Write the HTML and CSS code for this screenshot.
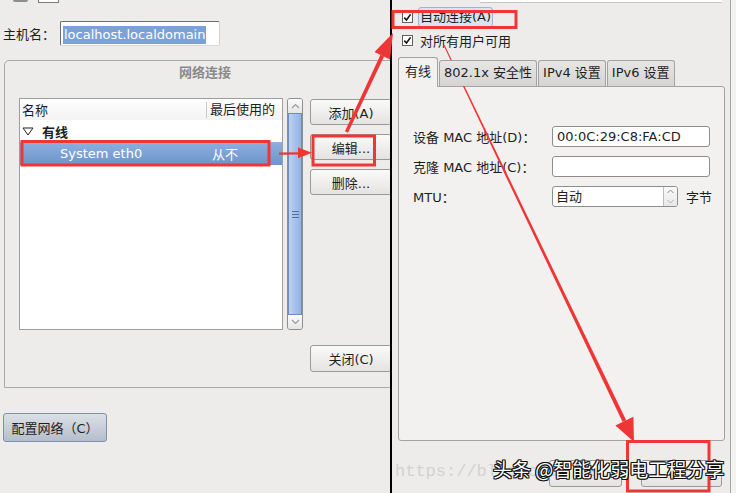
FILE: index.html
```html
<!DOCTYPE html>
<html lang="zh-CN">
<head>
    <meta charset="UTF-8">
    <meta name="viewport" content="width=device-width, initial-scale=1.0">
    <title>网络连接</title>
    <link rel="stylesheet" href="styles.css">
</head>
<body>
<div class="screen">
    <div class="win-left">
        <div class="stub"><span class="stub-a"></span><span class="stub-b"></span></div>
        <div class="host-row">
            <span class="host-label">主机名：</span>
            <div class="host-input"><span class="host-sel">localhost.localdomain</span></div>
        </div>
        <div class="group">
            <div class="group-title">网络连接</div>
            <div class="group-body">
                <div class="list">
                    <div class="list-head"><span class="col-name">名称</span><span class="col-last">最后使用的</span></div>
                    <div class="list-row cat">
                        <svg class="expander" width="12" height="9" viewBox="0 0 12 9"><polygon points="1,1 11,1 6,8" fill="none" stroke="#222" stroke-width="1"/></svg>
                        <b>有线</b>
                    </div>
                    <div class="list-row selected"><span class="col-name">System eth0</span><span class="col-last">从不</span></div>
                </div>
                <div class="scrollbar">
                    <div class="sb-btn"><svg width="9" height="6" viewBox="0 0 9 6"><polyline points="1,5 4.5,1.5 8,5" fill="none" stroke="#9a9a9a" stroke-width="1.2"/></svg></div>
                    <div class="sb-thumb"><span class="grip"></span></div>
                    <div class="sb-btn"><svg width="9" height="6" viewBox="0 0 9 6"><polyline points="1,1 4.5,4.5 8,1" fill="none" stroke="#9a9a9a" stroke-width="1.2"/></svg></div>
                </div>
                <div class="side-buttons">
                    <button class="btn">添加(A)</button>
                    <button class="btn">编辑...</button>
                    <button class="btn">删除...</button>
                </div>
            </div>
            <div class="group-foot"><button class="btn close">关闭(C)</button></div>
        </div>
        <button class="btn-config">配置网络（C）</button>
    </div>

    <div class="divider"></div>

    <div class="win-right">
        <div class="frame">
            <div class="top-field"></div>
            <div class="check-row first">
                <svg class="cb" width="11" height="11" viewBox="0 0 11 11"><rect x="0.5" y="0.5" width="10" height="10" fill="#fff" stroke="#5f5f5f"/><path d="M2.3 5.6 L4.5 8 L8.6 2.4" fill="none" stroke="#111" stroke-width="1.6"/></svg>
                <span class="focus">自动连接(A)</span>
            </div>
            <div class="check-row second">
                <svg class="cb" width="11" height="11" viewBox="0 0 11 11"><rect x="0.5" y="0.5" width="10" height="10" fill="#fff" stroke="#5f5f5f"/><path d="M2.3 5.6 L4.5 8 L8.6 2.4" fill="none" stroke="#111" stroke-width="1.6"/></svg>
                <span>对所有用户可用</span>
            </div>
            <div class="tabs">
                <span class="tab active">有线</span>
                <span class="tab">802.1x 安全性</span>
                <span class="tab">IPv4 设置</span>
                <span class="tab">IPv6 设置</span>
            </div>
            <div class="panel">
                <div class="form">
                    <span class="form-label">设备 MAC 地址(D)：</span>
                    <div class="field">00:0C:29:C8:FA:CD</div>
                    <span class="form-label">克隆 MAC 地址(C)：</span>
                    <div class="field"></div>
                    <span class="form-label">MTU：</span>
                    <div class="spin-row">
                        <div class="spin">
                            <span class="spin-val">自动</span>
                            <span class="spin-btns">
                                <span><svg width="7" height="5" viewBox="0 0 7 5"><polyline points="0.5,4 3.5,1 6.5,4" fill="none" stroke="#8a8a8a"/></svg></span>
                                <span><svg width="7" height="5" viewBox="0 0 7 5"><polyline points="0.5,1 3.5,4 6.5,1" fill="none" stroke="#b0b0b0"/></svg></span>
                            </span>
                        </div>
                        <span class="unit">字节</span>
                    </div>
                </div>
            </div>
            <div class="dlg-buttons">
                <button class="btn dlg-a"></button>
                <button class="btn dlg-b"></button>
            </div>
        </div>
    </div>

    <div class="watermark">https://blog.csdn.net/</div>

    <svg class="marks" width="736" height="493" viewBox="0 0 736 493">
        <g fill="none" stroke="#ef3636" stroke-width="3">
            <rect x="22" y="141.5" width="247" height="23.5"/>
            <rect x="313" y="136" width="61.5" height="29"/>
            <rect x="393" y="11.5" width="123" height="16"/>
            <rect x="627.5" y="441.5" width="81.5" height="49.5"/>
        </g>
        <g fill="#ef3636">
            <polygon points="279,152.6 300,152.2 300,154.4 279,154.8"/>
            <polygon points="312,152.8 298,147.6 298,158.2"/>
            <polygon points="345,131.3 348,132.7 384.1,56.5 380.5,54.7"/>
            <polygon points="393,33 390,59.5 374.5,52"/>
            <polygon points="443.5,45.2 444.5,44.8 626.2,420.3 622.6,422.1"/>
            <polygon points="634,442 615.4,425.6 633.4,416.8"/>
        </g>
    </svg>

    <div class="toutiao">头条 @智能化弱电工程分享</div>
</div>
</body>
</html>
```

FILE: styles.css
```css
* {
    box-sizing: border-box;
}
html, body {
    margin: 0;
    padding: 0;
}
body {
    width: 736px;
    height: 493px;
    overflow: hidden;
    background: #edecea;
    font-family: "DejaVu Sans", "Noto Sans CJK SC", sans-serif;
    font-size: 13px;
    color: #1e1e1e;
}
.screen {
    position: relative;
    display: flex;
    width: 736px;
    height: 493px;
}

/* left window */
.win-left {
    flex: none;
    width: 390px;
    height: 493px;
    overflow: hidden;
    background: #edecea;
}
.stub {
    display: flex;
    height: 3px;
}
.stub-a {
    margin-left: 13px;
    width: 15px;
    height: 2px;
    background: #8c928a;
    border-radius: 0 0 3px 3px;
}
.stub-b {
    margin-left: 10px;
    width: 21px;
    height: 3px;
    background: #fff;
    border: 1px solid #7a7a7a;
    border-top: 0;
}
.host-row {
    display: flex;
    align-items: center;
    height: 25px;
    margin-top: 18px;
}
.host-label {
    width: 60px;
    padding-left: 3px;
}
.host-input {
    width: 160px;
    height: 25px;
    background: #fff;
    border: 1px solid;
    border-color: #6e6e6e #d0d0d0 #d9d9d9 #6e6e6e;
    border-radius: 2px;
    padding: 4px 0 0 2px;
}
.host-sel {
    display: inline-block;
    background: #7aa2d8;
    color: #fff;
    line-height: 18px;
    padding: 0 1px;
}
.group {
    width: 402px;
    height: 328px;
    margin: 14px 0 0 4px;
    border: 1px solid #a9a9a9;
    border-radius: 5px 0 0 0;
}
.group-title {
    text-align: center;
    font-weight: bold;
    color: #8a8a8a;
    line-height: 16px;
    padding-top: 4px;
}
.group-body {
    display: flex;
    align-items: flex-start;
    margin: 17px 0 0 14px;
}
.list {
    width: 264px;
    height: 232px;
    background: #fff;
    border: 1px solid #9e9e9e;
}
.list-head {
    display: flex;
    align-items: center;
    height: 21px;
    background: linear-gradient(#ffffff, #f3f3f3);
}
.list-head .col-name {
    width: 186px;
    padding-left: 2px;
}
.list-head .col-last {
    border-left: 1px solid #c9c9c9;
    padding-left: 3px;
    line-height: 16px;
}
.list-row {
    display: flex;
    align-items: center;
    height: 22px;
}
.cat {
    padding-left: 2px;
}
.expander {
    margin-right: 8px;
}
.selected {
    height: 23px;
    background: linear-gradient(#8cb0df, #6d93ca);
    color: #fff;
}
.selected .col-name {
    width: 187px;
    padding-left: 40px;
}
.selected .col-last {
    padding-left: 5px;
}
.scrollbar {
    display: flex;
    flex-direction: column;
    width: 16px;
    height: 232px;
    margin-left: 4px;
    border: 1px solid #8f8f8f;
    border-radius: 3px;
    background: #e9e9e9;
    overflow: hidden;
}
.sb-btn {
    display: flex;
    align-items: center;
    justify-content: center;
    height: 14px;
    background: linear-gradient(#fbfbfb, #e6e6e6);
}
.sb-thumb {
    flex: 1;
    display: flex;
    align-items: center;
    justify-content: center;
    background: linear-gradient(90deg, #bcd2ef, #93b3e0);
    border: 1px solid #6d8cc0;
}
.grip {
    width: 7px;
    height: 7px;
    background: repeating-linear-gradient(#52709f 0 1px, transparent 1px 3px);
}
.side-buttons {
    display: flex;
    flex-direction: column;
    gap: 9px;
    margin: 1px 0 0 7px;
}
.btn {
    width: 82px;
    height: 26px;
    padding: 0;
    font-family: inherit;
    font-size: 13px;
    color: #1e1e1e;
    background: linear-gradient(#fafaf9, #e4e3e1);
    border: 1px solid #9a9a9a;
    border-radius: 3px;
}
.group-foot {
    margin-top: 15px;
    padding-left: 305px;
}
.btn.close {
    height: 27px;
}
.btn-config {
    display: block;
    width: 104px;
    height: 29px;
    margin: 25px 0 0 3px;
    padding: 0;
    font-family: inherit;
    font-size: 13px;
    color: #1e1e1e;
    background: linear-gradient(#dbe0e7, #b6becb);
    border: 1px solid #7d90ad;
    border-radius: 3px;
}

.divider {
    flex: none;
    width: 2px;
    background: #000;
}

/* right window */
.win-right {
    flex: 1;
    background: #f3f3f2;
}
.frame {
    width: 339px;
    height: 493px;
    background: #edecea;
    border-right: 1px solid #a7a7a7;
}
.top-field {
    width: 242px;
    height: 3px;
    margin-left: 88px;
    background: #fff;
    border-bottom: 1px solid #c5c5c5;
}
.check-row {
    display: flex;
    align-items: center;
    padding-left: 10px;
}
.check-row.first {
    height: 20px;
    margin-top: 4px;
}
.check-row.second {
    height: 18px;
    margin-top: 4px;
}
.check-row.first .cb {
    margin-right: 5px;
}
.check-row.second .cb {
    margin-right: 7px;
}
.focus {
    height: 20px;
    line-height: 18px;
    padding: 0 1px;
    background: #dbe3ee;
    border: 1px solid #a0b4cf;
    border-radius: 3px;
}
.tabs {
    position: relative;
    z-index: 1;
    display: flex;
    align-items: flex-end;
    gap: 1px;
    height: 29px;
    margin: 8px 0 0 6px;
}
.tab {
    height: 26px;
    line-height: 24px;
    padding: 0 4px;
    white-space: nowrap;
    background: linear-gradient(#e7e6e4, #d5d4d2);
    border: 1px solid #a3a3a3;
    border-bottom: 0;
    border-radius: 3px 3px 0 0;
}
.tab.active {
    height: 30px;
    line-height: 28px;
    padding: 0 6px;
    margin-bottom: -1px;
    background: #f2f1ef;
}
.panel {
    width: 327px;
    height: 355px;
    margin-left: 6px;
    padding: 39px 0 0 14px;
    background: #f2f1ef;
    border: 1px solid #a3a3a3;
    border-radius: 0 3px 3px 3px;
}
.form {
    display: grid;
    grid-template-columns: 139px 158px;
    row-gap: 9px;
    align-items: center;
}
.field {
    height: 21px;
    line-height: 19px;
    padding-left: 4px;
    background: #fff;
    border: 1px solid #8d8d8d;
    border-radius: 3px;
}
.spin-row {
    display: flex;
    align-items: center;
    gap: 8px;
    white-space: nowrap;
}
.spin {
    flex: none;
    display: flex;
    width: 126px;
    height: 21px;
    background: #fff;
    border: 1px solid #8d8d8d;
    border-radius: 3px;
    overflow: hidden;
}
.spin-val {
    flex: 1;
    line-height: 19px;
    padding-left: 3px;
}
.spin-btns {
    display: flex;
    flex-direction: column;
    width: 14px;
    border-left: 1px solid #bdbdbd;
    background: linear-gradient(#fafafa, #e8e8e8);
}
.spin-btns span {
    flex: 1;
    display: flex;
    align-items: center;
    justify-content: center;
}
.unit {
    flex: none;
}
.dlg-buttons {
    display: flex;
    justify-content: flex-end;
    gap: 19px;
    margin-top: 19px;
    padding-right: 8px;
}
.dlg-a {
    width: 73px;
    height: 27px;
}
.dlg-b {
    width: 81px;
    height: 27px;
}

/* overlays */
.watermark {
    position: absolute;
    left: 395px;
    top: 462px;
    font-family: "Liberation Mono", monospace;
    font-size: 17px;
    color: #d2d2d2;
    white-space: nowrap;
}
.marks {
    position: absolute;
    left: 0;
    top: 0;
    pointer-events: none;
}
.toutiao {
    position: absolute;
    left: 493px;
    top: 457px;
    font-family: "Noto Sans CJK SC", "DejaVu Sans", sans-serif;
    font-size: 19px;
    line-height: 24px;
    color: #fff;
    white-space: nowrap;
    text-shadow: 1px 1px 0 #111, -1px -1px 0 #111, 1px -1px 0 #111, -1px 1px 0 #111, 1px 0 0 #111, -1px 0 0 #111, 0 1px 0 #111, 0 -1px 0 #111;
}
```
